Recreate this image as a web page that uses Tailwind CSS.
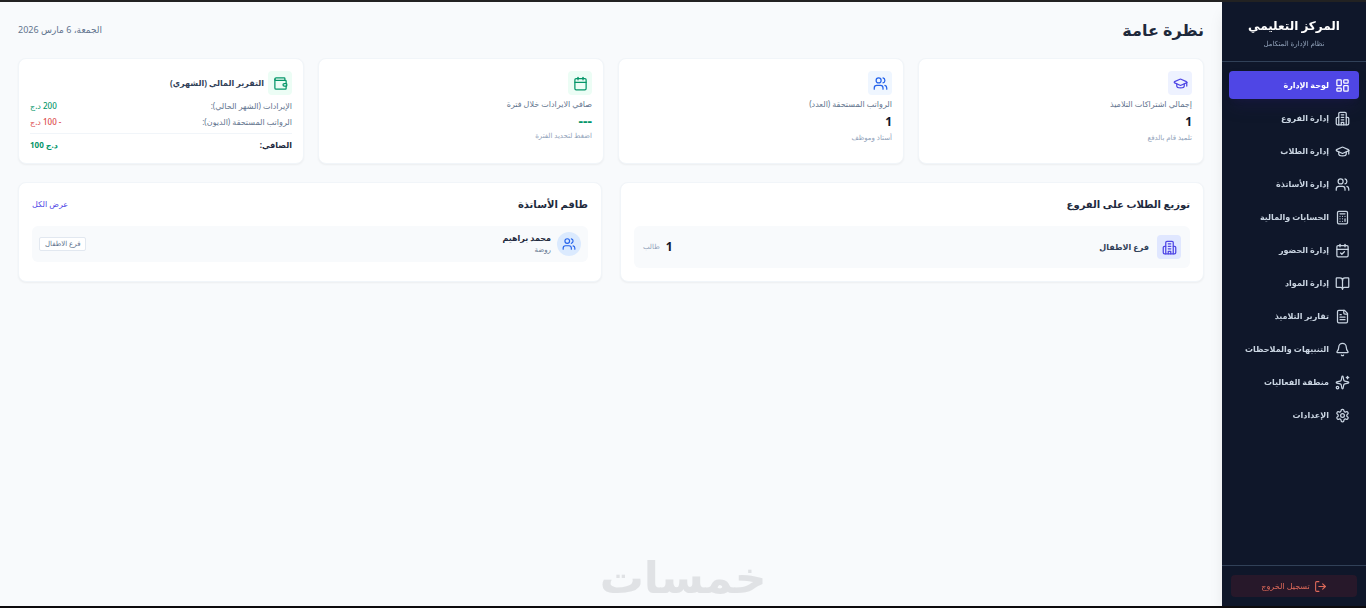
<!DOCTYPE html>
<html lang="ar" dir="rtl">
<head>
    <title>المركز التعليمي</title>
    <meta charset="UTF-8">
    <meta name="viewport" content="width=device-width, initial-scale=1.0">
    <script src="https://cdn.jsdelivr.net/npm/@tailwindcss/browser@4"></script>
</head>
<body class="min-h-screen flex flex-col bg-[#f8fafc] border-t-2 border-t-[#222222] border-b-2 border-b-[#0d0b0d] font-['Noto_Sans','DejaVu_Sans',sans-serif] whitespace-nowrap">
    <!-- icons used more than once -->
    <svg class="hidden">
        <symbol id="users" viewBox="0 0 24 24">
            <path d="M16 21v-2a4 4 0 0 0-4-4H6a4 4 0 0 0-4 4v2"/><circle cx="9" cy="7" r="4"/><path d="M22 21v-2a4 4 0 0 0-3-3.87"/><path d="M16 3.13a4 4 0 0 1 0 7.75"/>
        </symbol>
        <symbol id="building" viewBox="0 0 24 24">
            <path d="M6 22V4a2 2 0 0 1 2-2h8a2 2 0 0 1 2 2v18"/><path d="M6 10H4a2 2 0 0 0-2 2v8a2 2 0 0 0 2 2h16a2 2 0 0 0 2-2v-8a2 2 0 0 0-2-2h-2"/><path d="M10 6h4"/><path d="M10 10h4"/><path d="M10 14h4"/><path d="M10 22v-4h4v4"/>
        </symbol>
        <symbol id="cap" viewBox="0 0 24 24">
            <path d="M21.42 10.922a1 1 0 0 0-.019-1.838L12.83 5.18a2 2 0 0 0-1.66 0L2.6 9.08a1 1 0 0 0 0 1.832l8.57 3.908a2 2 0 0 0 1.66 0z"/><path d="M22 10v6"/><path d="M6 12.500V16a6 3 0 0 0 12 0v-3.500"/>
        </symbol>
    </svg>

    <div class="flex-1 flex">
        <!-- Sidebar -->
        <aside class="w-36 shrink-0 flex flex-col bg-[#0f172a] text-slate-300 shadow-lg z-10">
            <div class="h-15 pt-3 text-center border-b border-slate-700">
                <h1 class="text-[12px] leading-6 font-bold text-white">المركز التعليمي</h1>
                <p class="text-[7px] leading-3 text-slate-400">نظام الإدارة المتكامل</p>
            </div>

            <nav class="flex-1 flex flex-col gap-[5px] px-[7px] py-[9px] text-[8px] font-bold">
                <a href="#" class="h-7 flex items-center gap-[6px] px-[9px] rounded bg-[#4f46e5] text-white shadow-lg shadow-indigo-950/40">
                    <svg class="size-[15px] shrink-0" viewBox="0 0 24 24" fill="none" stroke="currentColor" stroke-width="2" stroke-linecap="round" stroke-linejoin="round"><rect x="3" y="3" width="7" height="9" rx="1"/><rect x="14" y="3" width="7" height="5" rx="1"/><rect x="14" y="12" width="7" height="9" rx="1"/><rect x="3" y="16" width="7" height="5" rx="1"/></svg>
                    لوحة الإدارة
                </a>
                <a href="#" class="h-7 flex items-center gap-[6px] px-[9px] rounded hover:bg-slate-800">
                    <svg class="size-[15px] shrink-0" fill="none" stroke="currentColor" stroke-width="2" stroke-linecap="round" stroke-linejoin="round"><use href="#building"/></svg>
                    إدارة الفروع
                </a>
                <a href="#" class="h-7 flex items-center gap-[6px] px-[9px] rounded hover:bg-slate-800">
                    <svg class="size-[15px] shrink-0" fill="none" stroke="currentColor" stroke-width="2" stroke-linecap="round" stroke-linejoin="round"><use href="#cap"/></svg>
                    إدارة الطلاب
                </a>
                <a href="#" class="h-7 flex items-center gap-[6px] px-[9px] rounded hover:bg-slate-800">
                    <svg class="size-[15px] shrink-0" fill="none" stroke="currentColor" stroke-width="2" stroke-linecap="round" stroke-linejoin="round"><use href="#users"/></svg>
                    إدارة الأساتذة
                </a>
                <a href="#" class="h-7 flex items-center gap-[6px] px-[9px] rounded hover:bg-slate-800">
                    <svg class="size-[15px] shrink-0" viewBox="0 0 24 24" fill="none" stroke="currentColor" stroke-width="2" stroke-linecap="round" stroke-linejoin="round"><rect width="16" height="20" x="4" y="2" rx="2"/><path d="M8 6h8"/><path d="M16 14v4"/><path d="M16 10h.01"/><path d="M12 10h.01"/><path d="M8 10h.01"/><path d="M12 14h.01"/><path d="M8 14h.01"/><path d="M12 18h.01"/><path d="M8 18h.01"/></svg>
                    الحسابات والمالية
                </a>
                <a href="#" class="h-7 flex items-center gap-[6px] px-[9px] rounded hover:bg-slate-800">
                    <svg class="size-[15px] shrink-0" viewBox="0 0 24 24" fill="none" stroke="currentColor" stroke-width="2" stroke-linecap="round" stroke-linejoin="round"><path d="M8 2v4"/><path d="M16 2v4"/><rect width="18" height="18" x="3" y="4" rx="2"/><path d="M3 10h18"/><path d="m9 16 2 2 4-4"/></svg>
                    إدارة الحضور
                </a>
                <a href="#" class="h-7 flex items-center gap-[6px] px-[9px] rounded hover:bg-slate-800">
                    <svg class="size-[15px] shrink-0" viewBox="0 0 24 24" fill="none" stroke="currentColor" stroke-width="2" stroke-linecap="round" stroke-linejoin="round"><path d="M12 7v14"/><path d="M3 18a1 1 0 0 1-1-1V4a1 1 0 0 1 1-1h5a4 4 0 0 1 4 4 4 4 0 0 1 4-4h5a1 1 0 0 1 1 1v13a1 1 0 0 1-1 1h-6a3 3 0 0 0-3 3 3 3 0 0 0-3-3z"/></svg>
                    إدارة المواد
                </a>
                <a href="#" class="h-7 flex items-center gap-[6px] px-[9px] rounded hover:bg-slate-800">
                    <svg class="size-[15px] shrink-0" viewBox="0 0 24 24" fill="none" stroke="currentColor" stroke-width="2" stroke-linecap="round" stroke-linejoin="round"><path d="M15 2H6a2 2 0 0 0-2 2v16a2 2 0 0 0 2 2h12a2 2 0 0 0 2-2V7Z"/><path d="M14 2v4a2 2 0 0 0 2 2h4"/><path d="M10 9H8"/><path d="M16 13H8"/><path d="M16 17H8"/></svg>
                    تقارير التلاميذ
                </a>
                <a href="#" class="h-7 flex items-center gap-[6px] px-[9px] rounded hover:bg-slate-800">
                    <svg class="size-[15px] shrink-0" viewBox="0 0 24 24" fill="none" stroke="currentColor" stroke-width="2" stroke-linecap="round" stroke-linejoin="round"><path d="M10.268 21a2 2 0 0 0 3.464 0"/><path d="M3.262 15.326A1 1 0 0 0 4 17h16a1 1 0 0 0 .740-1.673C19.410 13.956 18 12.499 18 8A6 6 0 0 0 6 8c0 4.499-1.411 5.956-2.738 7.326"/></svg>
                    التنبيهات والملاحظات
                </a>
                <a href="#" class="h-7 flex items-center gap-[6px] px-[9px] rounded hover:bg-slate-800">
                    <svg class="size-[15px] shrink-0" viewBox="0 0 24 24" fill="none" stroke="currentColor" stroke-width="2" stroke-linecap="round" stroke-linejoin="round"><path d="M11.017 2.814a1 1 0 0 1 1.966 0l1.051 5.558a2 2 0 0 0 1.594 1.594l5.558 1.051a1 1 0 0 1 0 1.966l-5.558 1.051a2 2 0 0 0-1.594 1.594l-1.051 5.558a1 1 0 0 1-1.966 0l-1.051-5.558a2 2 0 0 0-1.594-1.594l-5.558-1.051a1 1 0 0 1 0-1.966l5.558-1.051a2 2 0 0 0 1.594-1.594z"/><path d="M20 2v4"/><path d="M22 4h-4"/><circle cx="4" cy="20" r="2"/></svg>
                    منطقة الفعاليات
                </a>
                <a href="#" class="h-7 flex items-center gap-[6px] px-[9px] rounded hover:bg-slate-800">
                    <svg class="size-[15px] shrink-0" viewBox="0 0 24 24" fill="none" stroke="currentColor" stroke-width="2" stroke-linecap="round" stroke-linejoin="round"><path d="M12.220 2h-.440a2 2 0 0 0-2 2v.180a2 2 0 0 1-1 1.730l-.430.250a2 2 0 0 1-2 0l-.150-.080a2 2 0 0 0-2.730.730l-.220.380a2 2 0 0 0 .730 2.730l.150.100a2 2 0 0 1 1 1.720v.510a2 2 0 0 1-1 1.740l-.150.090a2 2 0 0 0-.730 2.730l.220.380a2 2 0 0 0 2.730.730l.150-.080a2 2 0 0 1 2 0l.430.250a2 2 0 0 1 1 1.730V20a2 2 0 0 0 2 2h.440a2 2 0 0 0 2-2v-.180a2 2 0 0 1 1-1.730l.430-.250a2 2 0 0 1 2 0l.150.080a2 2 0 0 0 2.730-.730l.220-.390a2 2 0 0 0-.730-2.730l-.150-.080a2 2 0 0 1-1-1.740v-.500a2 2 0 0 1 1-1.740l.150-.090a2 2 0 0 0 .730-2.730l-.220-.380a2 2 0 0 0-2.730-.730l-.150.080a2 2 0 0 1-2 0l-.430-.250a2 2 0 0 1-1-1.730V4a2 2 0 0 0-2-2z"/><circle cx="12" cy="12" r="3"/></svg>
                    الإعدادات
                </a>
            </nav>

            <div class="px-[9px] py-[9px] border-t border-slate-700">
                <button type="button" class="w-full h-[22px] flex items-center justify-center gap-1 rounded bg-[#27182a] text-[8px] font-medium text-[#e06a5a] hover:bg-red-950">
                    <svg class="size-[13px] shrink-0" viewBox="0 0 24 24" fill="none" stroke="currentColor" stroke-width="2" stroke-linecap="round" stroke-linejoin="round"><path d="m16 17 5-5-5-5"/><path d="M21 12H9"/><path d="M9 21H5a2 2 0 0 1-2-2V5a2 2 0 0 1 2-2h4"/></svg>
                    تسجيل الخروج
                </button>
            </div>
        </aside>

        <!-- Content -->
        <main class="flex-1 min-w-0 p-[18px] flex flex-col gap-[18px]">
            <header class="h-5 flex items-center justify-between">
                <h2 class="text-[16px] leading-5 font-bold text-[#1e293b]">نظرة عامة</h2>
                <span class="text-[9px] text-slate-500">الجمعة، 6 مارس 2026</span>
            </header>

            <section class="grid grid-cols-4 gap-[14px]">
                <div class="h-[106px] px-[11px] py-3 flex flex-col items-start bg-white rounded-lg border border-slate-100 shadow-xs">
                    <div class="size-6 flex items-center justify-center rounded bg-indigo-50 text-[#4f46e5]">
                        <svg class="size-[15px]" fill="none" stroke="currentColor" stroke-width="2" stroke-linecap="round" stroke-linejoin="round"><use href="#cap"/></svg>
                    </div>
                    <p class="mt-px text-[8px] leading-4 text-slate-500">إجمالي اشتراكات التلاميذ</p>
                    <p class="text-[12px] leading-5 font-bold text-slate-900">1</p>
                    <p class="text-[7px] leading-3 text-slate-400">تلميذ قام بالدفع</p>
                </div>
                <div class="h-[106px] px-[11px] py-3 flex flex-col items-start bg-white rounded-lg border border-slate-100 shadow-xs">
                    <div class="size-6 flex items-center justify-center rounded bg-blue-50 text-[#2563eb]">
                        <svg class="size-[15px]" fill="none" stroke="currentColor" stroke-width="2" stroke-linecap="round" stroke-linejoin="round"><use href="#users"/></svg>
                    </div>
                    <p class="mt-px text-[8px] leading-4 text-slate-500">الرواتب المستحقة (العدد)</p>
                    <p class="text-[12px] leading-5 font-bold text-slate-900">1</p>
                    <p class="text-[7px] leading-3 text-slate-400">أستاذ وموظف</p>
                </div>
                <button type="button" class="h-[106px] px-[11px] py-3 flex flex-col items-start text-start bg-white rounded-lg border border-slate-100 shadow-xs hover:border-emerald-200">
                    <span class="size-6 flex items-center justify-center rounded bg-emerald-50 text-[#059669]">
                        <svg class="size-[15px]" viewBox="0 0 24 24" fill="none" stroke="currentColor" stroke-width="2" stroke-linecap="round" stroke-linejoin="round"><path d="M8 2v4"/><path d="M16 2v4"/><rect width="18" height="18" x="3" y="4" rx="2"/><path d="M3 10h18"/></svg>
                    </span>
                    <span class="mt-px text-[8px] leading-4 text-slate-500">صافي الايرادات خلال فترة</span>
                    <span class="text-[14px] leading-[18px] font-bold text-[#059669]">---</span>
                    <span class="text-[7px] leading-3 text-slate-400">اضغط لتحديد الفترة</span>
                </button>
                <div class="h-[106px] px-[11px] py-3 bg-white rounded-lg border border-slate-100 shadow-xs">
                    <div class="flex items-center gap-1">
                        <div class="size-6 flex items-center justify-center rounded bg-emerald-50 text-[#059669]">
                            <svg class="size-[15px]" viewBox="0 0 24 24" fill="none" stroke="currentColor" stroke-width="2" stroke-linecap="round" stroke-linejoin="round"><path d="M19 7V4a1 1 0 0 0-1-1H5a2 2 0 0 0 0 4h15a1 1 0 0 1 1 1v4h-3a2 2 0 0 0 0 4h3a1 1 0 0 0 1-1v-2a1 1 0 0 0-1-1"/><path d="M3 5v14a2 2 0 0 0 2 2h15a1 1 0 0 0 1-1v-4"/></svg>
                        </div>
                        <h3 class="text-[8px] font-bold text-slate-700">التقرير المالي (الشهري)</h3>
                    </div>
                    <div class="mt-[3px] flex justify-between text-[8px] leading-4">
                        <span class="text-slate-500">الإيرادات (الشهر الحالي):</span>
                        <span class="font-medium text-[#059669]">200 د.ج</span>
                    </div>
                    <div class="flex justify-between text-[8px] leading-4">
                        <span class="text-slate-500">الرواتب المستحقة (الديون):</span>
                        <span class="font-medium text-[#dc4a4a]">- 100 د.ج</span>
                    </div>
                    <div class="mt-[3px] pt-[3px] flex justify-between border-t border-slate-100 text-[8px] leading-4 font-bold">
                        <span class="text-slate-800">الصافي:</span>
                        <span dir="ltr" class="text-[#059669]">100 د.ج</span>
                    </div>
                </div>
            </section>

            <section class="grid grid-cols-2 gap-[18px]">
                <div class="h-[100px] p-[13px] bg-white rounded-lg border border-slate-100 shadow-xs">
                    <h3 class="text-[10px] leading-4 font-bold text-slate-800">توزيع الطلاب على الفروع</h3>
                    <div class="mt-[14px] h-[42px] px-[9px] flex items-center gap-2 rounded-md bg-[#f8fafc]">
                        <div class="size-6 flex items-center justify-center rounded bg-indigo-100 text-[#4f46e5]">
                            <svg class="size-[15px]" fill="none" stroke="currentColor" stroke-width="2" stroke-linecap="round" stroke-linejoin="round"><use href="#building"/></svg>
                        </div>
                        <span class="text-[8px] font-bold text-slate-700">فرع الاطفال</span>
                        <span class="ms-auto flex items-center gap-[6px]">
                            <b class="text-[12px] leading-5 font-bold text-slate-900">1</b>
                            <span class="text-[7px] text-slate-400">طالب</span>
                        </span>
                    </div>
                </div>
                <div class="h-[100px] p-[13px] bg-white rounded-lg border border-slate-100 shadow-xs">
                    <div class="flex items-center justify-between">
                        <h3 class="text-[10px] leading-4 font-bold text-slate-800">طاقم الأساتذة</h3>
                        <a href="#" class="text-[8px] leading-4 text-[#4f46e5] hover:underline">عرض الكل</a>
                    </div>
                    <div class="mt-[14px] h-9 px-[7px] flex items-center gap-[6px] rounded-md bg-[#f8fafc]">
                        <div class="size-6 flex items-center justify-center rounded-full bg-blue-100 text-[#2563eb]">
                            <svg class="size-[14px]" fill="none" stroke="currentColor" stroke-width="2" stroke-linecap="round" stroke-linejoin="round"><use href="#users"/></svg>
                        </div>
                        <div>
                            <p class="text-[8px] leading-3 font-bold text-slate-800">محمد براهيم</p>
                            <p class="text-[7px] leading-3 text-slate-500">روضة</p>
                        </div>
                        <span class="ms-auto px-[5px] text-[7px] leading-3 text-slate-500 bg-white border border-slate-200 rounded-xs">فرع الاطفال</span>
                    </div>
                </div>
            </section>
        </main>
    </div>

    <!-- Watermark -->
    <div class="fixed bottom-2 inset-x-0 text-center text-[44px] leading-12 font-bold text-[#e0e2e5] pointer-events-none">خمسات</div>
</body>
</html>
